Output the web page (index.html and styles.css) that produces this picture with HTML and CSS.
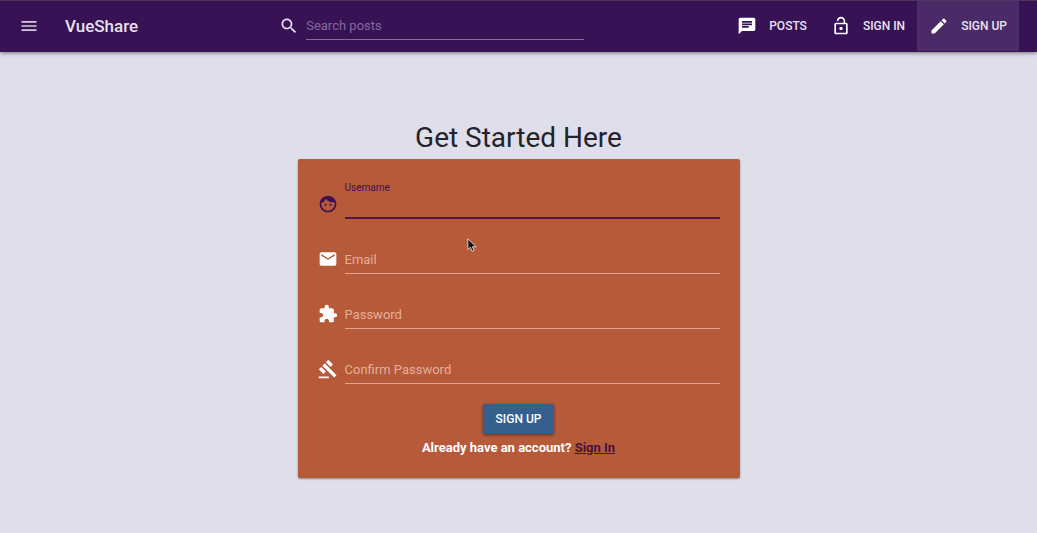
FILE: index.html
```html
<!DOCTYPE html>
<html lang="en">
<head>
<meta charset="utf-8">
<meta name="viewport" content="width=device-width, initial-scale=1">
<title>VueShare</title>
<link rel="stylesheet" href="styles.css">
</head>
<body>
<header class="toolbar">
  <div class="brand">
    <button class="menu-button" type="button" aria-label="Menu">
      <svg class="icon" viewBox="0 0 24 24"><path d="M3 18h18v-2H3v2zm0-5h18v-2H3v2zm0-7v2h18V6H3z"/></svg>
    </button>
    <a class="brand-name" href="#">VueShare</a>
  </div>
  <div class="search">
    <svg class="icon" viewBox="0 0 24 24"><path d="M15.5 14h-.79l-.28-.27C15.41 12.59 16 11.11 16 9.5 16 5.91 13.09 3 9.5 3S3 5.91 3 9.5 5.91 16 9.5 16c1.61 0 3.09-.59 4.23-1.57l.27.28v.79l5 4.99L20.49 19l-4.99-5zm-6 0C7.01 14 5 11.99 5 9.5S7.01 5 9.5 5 14 7.01 14 9.5 11.99 14 9.5 14z"/></svg>
    <input class="search-input" type="search" placeholder="Search posts" aria-label="Search posts">
  </div>
  <nav class="nav">
    <a class="nav-link" href="#">
      <svg class="icon" viewBox="0 0 24 24"><path d="M20 2H4c-1.1 0-1.99.9-1.99 2L2 22l4-4h14c1.1 0 2-.9 2-2V4c0-1.1-.9-2-2-2zM6 9h12v2H6V9zm8 5H6v-2h8v2zm4-6H6V6h12v2z"/></svg>
      POSTS
    </a>
    <a class="nav-link" href="#">
      <svg class="icon" viewBox="0 0 24 24"><path d="M12 17c1.1 0 2-.9 2-2s-.9-2-2-2-2 .9-2 2 .9 2 2 2zm6-9h-1V6c0-2.76-2.24-5-5-5S7 3.24 7 6h1.900c0-1.710 1.390-3.100 3.100-3.100s3.100 1.390 3.100 3.100v2H6c-1.100 0-2 .9-2 2v10c0 1.100.9 2 2 2h12c1.100 0 2-.9 2-2V10c0-1.100-.9-2-2-2zm0 12H6V10h12v10z"/></svg>
      SIGN IN
    </a>
    <a class="nav-link nav-link-active" href="#" aria-current="page">
      <svg class="icon" viewBox="0 0 24 24"><path d="M3 17.250V21h3.750L17.810 9.940l-3.750-3.750L3 17.250zM20.710 7.040c.39-.39.39-1.020 0-1.410l-2.340-2.340c-.39-.39-1.020-.39-1.410 0l-1.830 1.830 3.750 3.750 1.830-1.830z"/></svg>
      SIGN UP
    </a>
  </nav>
</header>
<main class="content">
  <h1 class="heading">Get Started Here</h1>
  <form class="card">
    <div class="field field-focused">
      <svg class="icon" viewBox="0 0 24 24"><path d="M9 11.750c-.69 0-1.250.56-1.250 1.250s.56 1.250 1.250 1.250 1.250-.56 1.250-1.250-.56-1.250-1.250-1.250zm6 0c-.69 0-1.250.56-1.250 1.250s.56 1.250 1.250 1.250 1.250-.56 1.250-1.250-.56-1.250-1.250-1.250zM12 2C6.480 2 2 6.480 2 12s4.480 10 10 10 10-4.480 10-10S17.520 2 12 2zm0 18c-4.410 0-8-3.590-8-8 0-.29.020-.58.050-.86 2.360-1.050 4.230-2.980 5.210-5.370C11.070 8.330 14.050 10 17.420 10c.78 0 1.530-.09 2.250-.26.210.71.330 1.470.330 2.260 0 4.410-3.590 8-8 8z"/></svg>
      <div class="control">
        <label class="label" for="username">Username</label>
        <input class="input" id="username" type="text">
      </div>
    </div>
    <div class="field">
      <svg class="icon" viewBox="0 0 24 24"><path d="M20 4H4c-1.100 0-1.990.9-1.990 2L2 18c0 1.100.9 2 2 2h16c1.100 0 2-.9 2-2V6c0-1.100-.9-2-2-2zm0 4l-8 5-8-5V6l8 5 8-5v2z"/></svg>
      <div class="control">
        <label class="label" for="email">Email</label>
        <input class="input" id="email" type="email">
      </div>
    </div>
    <div class="field">
      <svg class="icon" viewBox="0 0 24 24"><path d="M20.500 11H19V7c0-1.100-.9-2-2-2h-4V3.500C13 2.120 11.880 1 10.500 1S8 2.120 8 3.500V5H4c-1.100 0-1.990.9-1.990 2v3.800H3.500c1.490 0 2.700 1.210 2.700 2.700s-1.210 2.700-2.700 2.700H2V20c0 1.100.9 2 2 2h3.800v-1.500c0-1.490 1.210-2.700 2.700-2.700 1.490 0 2.700 1.210 2.700 2.700V22H17c1.100 0 2-.9 2-2v-4h1.500c1.380 0 2.500-1.120 2.500-2.500S21.880 11 20.500 11z"/></svg>
      <div class="control">
        <label class="label" for="password">Password</label>
        <input class="input" id="password" type="password">
      </div>
    </div>
    <div class="field">
      <svg class="icon" viewBox="0 0 24 24"><path d="M1 21h12v2H1zM5.245 8.070l2.830-2.827 14.140 14.142-2.828 2.828zM12.317 1l5.657 5.656-2.830 2.830-5.654-5.660zM3.825 9.485l5.657 5.657-2.828 2.828-5.657-5.657z"/></svg>
      <div class="control">
        <label class="label" for="confirm">Confirm Password</label>
        <input class="input" id="confirm" type="password">
      </div>
    </div>
    <button class="submit" type="submit">SIGN UP</button>
    <p class="account">Already have an account? <a class="account-link" href="#">Sign In</a></p>
  </form>
</main>
<svg class="pointer" viewBox="0 0 12 18" aria-hidden="true"><path d="M1 1v13l3-3 2 5 2.500-1-2-4.500H11z"/></svg>
</body>
</html>
```
FILE: styles.css
```css
* {
  box-sizing: border-box;
}

body {
  margin: 0;
  min-height: 100vh;
  background: #dfdeeb;
  color: #242329;
  font-family: Roboto, "Liberation Sans", sans-serif;
  font-size: 13px;
}

a {
  color: inherit;
  text-decoration: none;
}

.icon {
  display: block;
  flex: none;
  width: 20px;
  height: 20px;
  fill: currentColor;
}

.toolbar {
  display: flex;
  align-items: stretch;
  justify-content: space-between;
  height: 52px;
  padding: 0 18px 0 19px;
  border-top: 1px solid #4b3760;
  border-bottom: 1px solid #371255;
  background: #371255;
  color: #e9e1ef;
  box-shadow: 0 1px 4px rgba(0, 0, 0, 0.5);
}

.brand {
  display: flex;
  align-items: center;
  gap: 26px;
}

.menu-button {
  padding: 0;
  border: 0;
  background: none;
  color: #d6cbdd;
}

.brand-name {
  font-size: 17px;
  font-weight: 500;
}

.search {
  display: flex;
  align-items: center;
  gap: 7px;
  width: 305px;
}

.search-input {
  flex: 1;
  min-width: 0;
  height: 28px;
  padding: 0;
  border: 0;
  border-bottom: 1px solid #866b9a;
  outline: 0;
  background: none;
  color: inherit;
  font: inherit;
  appearance: none;
}

.search-input::placeholder {
  color: #84699a;
  opacity: 1;
}

.nav {
  display: flex;
}

.nav-link {
  display: flex;
  align-items: center;
  gap: 12px;
  padding: 0 12px;
  font-size: 12px;
  font-weight: 500;
}

.nav-link .icon {
  color: #fff;
}

.nav-link-active {
  background: #4b2a68;
}

.content {
  display: flex;
  flex-direction: column;
  align-items: center;
  padding: 68px 16px 32px;
}

.heading {
  margin: 0;
  font-size: 28px;
  font-weight: 400;
  line-height: 36px;
}

.card {
  display: flex;
  flex-direction: column;
  width: 100%;
  max-width: 442px;
  margin-top: 3px;
  padding: 5px 20px 20px;
  border-radius: 2px;
  background: #b65a3a;
  color: #fff;
  box-shadow: 0 1px 2px rgba(0, 0, 0, 0.4);
}

.field {
  display: flex;
  align-items: flex-end;
  gap: 7px;
  height: 55px;
}

.field .icon {
  margin-bottom: 5px;
}

.control {
  display: grid;
  flex: 1;
}

.label,
.input {
  grid-area: 1 / 1;
}

.label {
  align-self: center;
  color: #e5ae99;
  pointer-events: none;
}

.input {
  width: 100%;
  height: 29px;
  padding: 0;
  border: 0;
  border-bottom: 1px solid #dfa48d;
  outline: 0;
  background: none;
  color: inherit;
  font: inherit;
}

.field-focused {
  color: #3f1052;
}

.field-focused .control {
  display: flex;
  flex-direction: column;
}

.field-focused .label {
  align-self: flex-start;
  color: inherit;
  font-size: 10px;
  line-height: 12px;
}

.field-focused .input {
  height: 25px;
  border-bottom: 2px solid #551640;
}

.submit {
  align-self: center;
  height: 30px;
  margin: 20px 0 4px;
  padding: 0 13px;
  border: 0;
  border-radius: 2px;
  background: #355f8d;
  color: #fff;
  font: 500 12px Roboto, "Liberation Sans", sans-serif;
  box-shadow: 0 1px 3px rgba(0, 0, 0, 0.5);
}

.account {
  margin: 0;
  font-weight: 700;
  line-height: 20px;
  text-align: center;
}

.account-link {
  color: #471047;
  text-decoration: underline;
}

.pointer {
  position: absolute;
  top: 238px;
  left: 467px;
  width: 10px;
  height: 15px;
  fill: #111;
  stroke: #eee;
  stroke-width: 1;
}
```
